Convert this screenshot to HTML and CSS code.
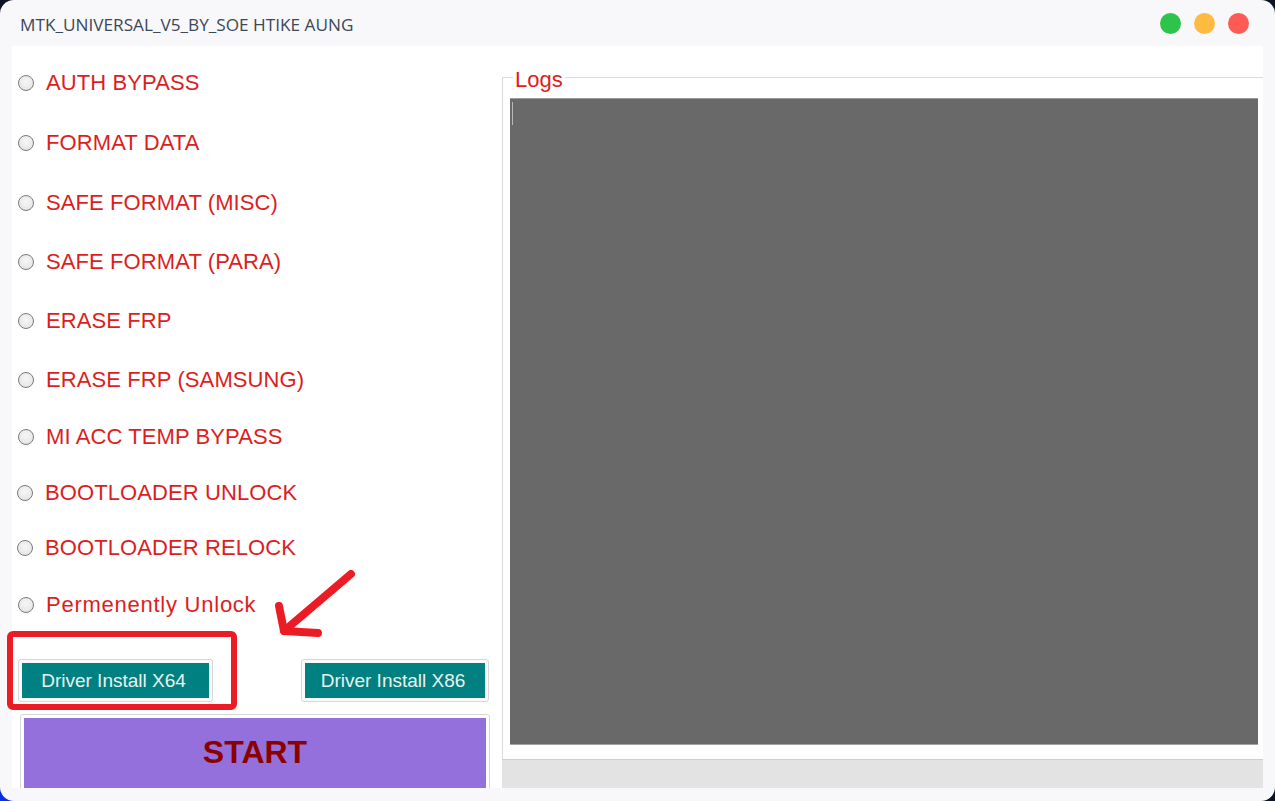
FILE: index.html
```html
<!DOCTYPE html>
<html lang="en">
<head>
<meta charset="utf-8">
<title>MTK_UNIVERSAL_V5_BY_SOE HTIKE AUNG</title>
<link rel="stylesheet" href="styles.css">
</head>
<body>
<div class="window">
  <header class="titlebar">
    <span class="title">MTK_UNIVERSAL_V5_BY_SOE HTIKE AUNG</span>
    <div class="lights">
      <span class="light green"></span>
      <span class="light yellow"></span>
      <span class="light red"></span>
    </div>
  </header>
  <main class="content">
    <section class="left">
      <div class="options">
        <label class="opt"><span class="radio"></span>AUTH BYPASS</label>
        <label class="opt"><span class="radio"></span>FORMAT DATA</label>
        <label class="opt"><span class="radio"></span>SAFE FORMAT (MISC)</label>
        <label class="opt"><span class="radio"></span>SAFE FORMAT (PARA)</label>
        <label class="opt"><span class="radio"></span>ERASE FRP</label>
        <label class="opt"><span class="radio"></span>ERASE FRP (SAMSUNG)</label>
        <label class="opt"><span class="radio"></span>MI ACC TEMP BYPASS</label>
        <label class="opt shift"><span class="radio"></span>BOOTLOADER UNLOCK</label>
        <label class="opt shift"><span class="radio"></span>BOOTLOADER RELOCK</label>
        <label class="opt lower"><span class="radio"></span>Permenently Unlock</label>
      </div>
      <div class="drivers">
        <div class="btn-frame wide"><button class="btn-teal">Driver Install X64</button></div>
        <div class="btn-frame"><button class="btn-teal">Driver Install X86</button></div>
      </div>
      <div class="start-frame"><button class="btn-start">START</button></div>
    </section>
    <section class="right">
      <div class="groupbox">
        <div class="legend">Logs</div>
        <div class="logarea"><span class="caret"></span></div>
        <div class="statusbar"></div>
      </div>
    </section>
  </main>
  <svg class="annot" width="1275" height="801" viewBox="0 0 1275 801">
    <rect x="10" y="634" width="224" height="73" rx="3" ry="3" fill="none" stroke="#ec1c24" stroke-width="6"/>
    <path d="M351 574 L284 631" fill="none" stroke="#ec1c24" stroke-width="8" stroke-linecap="round"/>
    <path d="M279 606 L284 631 L318 633" fill="none" stroke="#ec1c24" stroke-width="8" stroke-linecap="round" stroke-linejoin="round"/>
  </svg>
</div>
</body>
</html>
```

FILE: styles.css
```css
* { box-sizing: border-box; }
html, body {
  margin: 0;
  padding: 0;
}
body {
  width: 1275px;
  height: 801px;
  overflow: hidden;
  background: radial-gradient(circle at 0 100%, #0a2ee8 0 18px, transparent 19px), #0b1526;
}
.window {
  position: relative;
  width: 1275px;
  height: 801px;
  border-radius: 14px;
  background: #f8f8fb;
  overflow: hidden;
  display: flex;
  flex-direction: column;
}
.titlebar {
  height: 46px;
  flex: none;
  display: flex;
  align-items: center;
  justify-content: space-between;
  padding: 0 26px 0 20px;
}
.title {
  font-family: "Open Sans", "Noto Sans", sans-serif;
  font-size: 17.2px;
  color: #3c4757;
  position: relative;
  top: 1px;
}
.lights {
  display: flex;
  gap: 13px;
}
.light {
  width: 21px;
  height: 21px;
  border-radius: 50%;
}
.green { background: #2ec34a; }
.yellow { background: #fdbc40; }
.red { background: #fe5b56; }

.content {
  margin: 0 12px;
  height: 742px;
  background: #ffffff;
  display: flex;
  overflow: hidden;
}
.left {
  width: 490px;
  flex: none;
  display: flex;
  flex-direction: column;
}
.options {
  display: grid;
  grid-template-rows: 61px 60px 60px 58px 60px 58px 56px 55px 56px 58px;
  padding-top: 6px;
}
.opt {
  display: flex;
  align-items: center;
  gap: 12px;
  padding-left: 6px;
  font-family: "Liberation Sans", Arial, sans-serif;
  font-size: 22px;
  letter-spacing: 0.1px;
  color: #dc1e1e;
  white-space: nowrap;
}
.opt.shift { padding-left: 5px; }
.opt.lower { letter-spacing: 0.75px; }
.radio {
  width: 16px;
  height: 16px;
  border-radius: 50%;
  border: 1.5px solid #7a7a7a;
  background: radial-gradient(circle at 50% 40%, #f7f7f7, #e0e0e0);
  flex: none;
}
.drivers {
  display: flex;
  justify-content: space-between;
  padding: 0 13px 0 6px;
  margin-top: 25px;
}
.btn-frame {
  width: 188px;
  height: 43px;
  border: 1px solid #d6d6d6;
  border-radius: 3px;
  padding: 3px;
  background: #fbfbfb;
}
.btn-frame.wide { width: 195px; }
.btn-teal {
  width: 100%;
  height: 100%;
  border: none;
  background: #008080;
  color: #eaf2f2;
  font-family: "Liberation Sans", Arial, sans-serif;
  font-size: 19px;
  padding: 0 4px 0 0;
  margin: 0;
}
.start-frame {
  margin: 12px 0 0 8px;
  width: 470px;
  height: 80px;
  flex: none;
  border: 1px solid #d6d6d6;
  border-radius: 3px;
  padding: 3px;
}
.btn-start {
  width: 100%;
  height: 100%;
  border: none;
  margin: 0;
  padding: 0 0 4px 0;
  background: #9370db;
  color: #8b0000;
  font-family: "Liberation Sans", Arial, sans-serif;
  font-weight: bold;
  font-size: 32px;
  display: flex;
  align-items: center;
  justify-content: center;
}
.right {
  flex: 1;
  display: flex;
  flex-direction: column;
  padding-top: 31px;
  min-width: 0;
}
.groupbox {
  flex: 1;
  margin-right: -4px;
  border-top: 1px solid #dadada;
  border-left: 1px solid #dadada;
  display: flex;
  flex-direction: column;
}
.legend {
  align-self: flex-start;
  margin: -11px 0 0 10px;
  padding: 0 2px;
  background: #ffffff;
  font-family: "Liberation Sans", Arial, sans-serif;
  font-size: 22px;
  line-height: 25px;
  color: #dc1e1e;
}
.logarea {
  margin: 6px 0 0 7px;
  width: 748px;
  height: 647px;
  flex: none;
  background: #696969;
  border-top: 1px solid #9a9a9a;
  border-bottom: 1px solid #a5a5a5;
  padding: 3px 0 0 2px;
}
.caret {
  display: block;
  width: 1px;
  height: 23px;
  background: #b8b8b8;
}
.statusbar {
  margin: 14px 0 0 -1px;
  height: 40px;
  background: #e3e3e3;
  border-top: 1px solid #cfcfcf;
}
.annot {
  position: absolute;
  left: 0;
  top: 0;
  pointer-events: none;
}
```
